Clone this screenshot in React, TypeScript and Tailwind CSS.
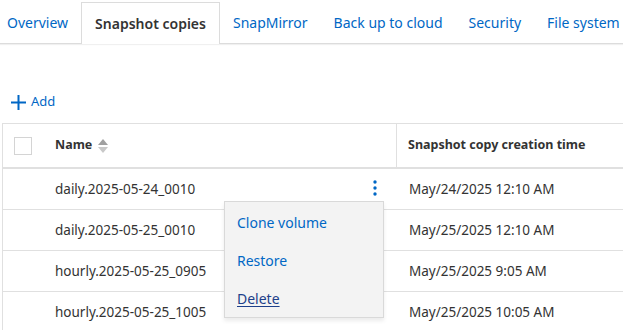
import { useState } from "react";

const tabs = [
  "Overview",
  "Snapshot copies",
  "SnapMirror",
  "Back up to cloud",
  "Security",
  "File system",
];

const snapshots = [
  { name: "daily.2025-05-24_0010", created: "May/24/2025 12:10 AM" },
  { name: "daily.2025-05-25_0010", created: "May/25/2025 12:10 AM" },
  { name: "hourly.2025-05-25_0905", created: "May/25/2025 9:05 AM" },
  { name: "hourly.2025-05-25_1005", created: "May/25/2025 10:05 AM" },
];

const App = () => {
  const [active] = useState("Snapshot copies");
  const [openRow] = useState(0);

  return (
    <div
      className="w-[623px] h-[330px] overflow-hidden bg-white text-[#333]"
      style={{ fontFamily: "'Noto Sans', 'Open Sans', sans-serif" }}
    >
      {/* Tabs */}
      <div className="flex items-end h-[44px] border-b border-[#dcdcdc] shadow-[0_1px_1px_rgba(0,0,0,0.06)] -ml-[6px]">
        {tabs.map((tab) => (
          <div
            key={tab}
            className={
              tab === active
                ? "h-[42px] px-[13px] flex items-center bg-white border border-b-0 border-[#dcdcdc] -mb-px text-[14px] font-semibold text-[#333] whitespace-nowrap"
                : "h-[42px] px-[13px] flex items-center text-[14px] text-[#0067c5] whitespace-nowrap"
            }
          >
            {tab}
          </div>
        ))}
      </div>

      {/* Add */}
      <div className="mt-[50px] ml-[11px] flex items-center gap-[5px] h-[16px] text-[13px] text-[#0067c5]">
        <svg width="15" height="15" viewBox="0 0 15 15">
          <path d="M7.5 0v15M0 7.5h15" stroke="#0067c5" strokeWidth="2" />
        </svg>
        <span>Add</span>
      </div>

      {/* Table */}
      <div className="relative mt-[13px] ml-[2px] w-[700px] border-l border-t border-[#e0e0e0]">
        <div className="flex h-[45px] border-b-2 border-[#e0e0e0] text-[12.5px] font-bold text-[#333]">
          <div className="w-[393px] flex items-center">
            <div className="ml-[11px] w-[18px] h-[18px] border border-[#d4d4d4] bg-white" />
            <span className="ml-[23px]">Name</span>
            <svg className="ml-[6px]" width="10" height="14" viewBox="0 0 10 14">
              <path d="M5 0L10 6H0z" fill="#a0a0a0" />
              <path d="M0 8h10L5 14z" fill="#c8c8c8" />
            </svg>
          </div>
          <div className="flex-1 flex items-center pl-[11px] border-l border-[#e0e0e0]">
            Snapshot copy creation time
          </div>
        </div>

        {snapshots.map((s, i) => (
          <div
            key={s.name}
            className="flex h-[41px] border-b border-[#e0e0e0] text-[13.5px] text-[#333]"
          >
            <div className="w-[393px] flex items-center">
              <span className="ml-[52px] flex-1">{s.name}</span>
              {i === openRow && (
                <svg className="mr-[19px] -mt-[2px]" width="4" height="16" viewBox="0 0 4 16">
                  <circle cx="2" cy="2" r="1.7" fill="#0067c5" />
                  <circle cx="2" cy="8" r="1.7" fill="#0067c5" />
                  <circle cx="2" cy="14" r="1.7" fill="#0067c5" />
                </svg>
              )}
            </div>
            <div className="flex-1 flex items-center pl-[13px]">{s.created}</div>
          </div>
        ))}

        {/* Row actions menu */}
        <div className="absolute left-[221px] top-[77px] w-[160px] bg-[#f3f3f3] border border-[#d9d9d9] shadow-[0_3px_4px_rgba(0,0,0,0.08)] text-[14px] pt-[1px]">
          <div className="h-[38px] flex items-center px-[12px] text-[#0067c5]">Clone volume</div>
          <div className="h-[38px] flex items-center px-[12px] text-[#0067c5]">Restore</div>
          <div className="h-[38px] flex items-center px-[12px] text-[#1d3f8a] underline underline-offset-2">
            Delete
          </div>
        </div>
      </div>
    </div>
  );
};

export default App;
